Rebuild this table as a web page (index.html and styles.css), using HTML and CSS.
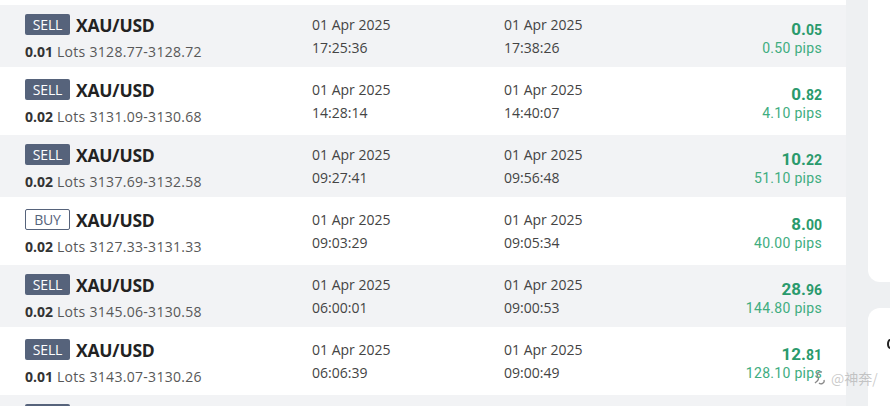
FILE: index.html
```html
<!DOCTYPE html>
<html>
<head>
<meta charset="utf-8">
<link rel="stylesheet" href="styles.css">
</head>
<body>
<div class="page">
  <div class="list">
    <div class="row alt">
      <div class="c-sym">
        <div class="sym-line"><span class="badge sell">SELL</span><span class="sym">XAU/USD</span></div>
        <div class="lots"><b>0.01</b> Lots 3128.77-3128.72</div>
      </div>
      <div class="c-date"><div>01 Apr 2025</div><div>17:25:36</div></div>
      <div class="c-date"><div>01 Apr 2025</div><div>17:38:26</div></div>
      <div class="c-profit"><div class="pnl"><span class="big">0.</span><span class="small">05</span></div><div class="pips">0.50 pips</div></div>
    </div>
    <div class="row">
      <div class="c-sym">
        <div class="sym-line"><span class="badge sell">SELL</span><span class="sym">XAU/USD</span></div>
        <div class="lots"><b>0.02</b> Lots 3131.09-3130.68</div>
      </div>
      <div class="c-date"><div>01 Apr 2025</div><div>14:28:14</div></div>
      <div class="c-date"><div>01 Apr 2025</div><div>14:40:07</div></div>
      <div class="c-profit"><div class="pnl"><span class="big">0.</span><span class="small">82</span></div><div class="pips">4.10 pips</div></div>
    </div>
    <div class="row alt">
      <div class="c-sym">
        <div class="sym-line"><span class="badge sell">SELL</span><span class="sym">XAU/USD</span></div>
        <div class="lots"><b>0.02</b> Lots 3137.69-3132.58</div>
      </div>
      <div class="c-date"><div>01 Apr 2025</div><div>09:27:41</div></div>
      <div class="c-date"><div>01 Apr 2025</div><div>09:56:48</div></div>
      <div class="c-profit"><div class="pnl"><span class="big">10.</span><span class="small">22</span></div><div class="pips">51.10 pips</div></div>
    </div>
    <div class="row">
      <div class="c-sym">
        <div class="sym-line"><span class="badge buy">BUY</span><span class="sym">XAU/USD</span></div>
        <div class="lots"><b>0.02</b> Lots 3127.33-3131.33</div>
      </div>
      <div class="c-date"><div>01 Apr 2025</div><div>09:03:29</div></div>
      <div class="c-date"><div>01 Apr 2025</div><div>09:05:34</div></div>
      <div class="c-profit"><div class="pnl"><span class="big">8.</span><span class="small">00</span></div><div class="pips">40.00 pips</div></div>
    </div>
    <div class="row alt">
      <div class="c-sym">
        <div class="sym-line"><span class="badge sell">SELL</span><span class="sym">XAU/USD</span></div>
        <div class="lots"><b>0.02</b> Lots 3145.06-3130.58</div>
      </div>
      <div class="c-date"><div>01 Apr 2025</div><div>06:00:01</div></div>
      <div class="c-date"><div>01 Apr 2025</div><div>09:00:53</div></div>
      <div class="c-profit"><div class="pnl"><span class="big">28.</span><span class="small">96</span></div><div class="pips">144.80 pips</div></div>
    </div>
    <div class="row">
      <div class="c-sym">
        <div class="sym-line"><span class="badge sell">SELL</span><span class="sym">XAU/USD</span></div>
        <div class="lots"><b>0.01</b> Lots 3143.07-3130.26</div>
      </div>
      <div class="c-date"><div>01 Apr 2025</div><div>06:06:39</div></div>
      <div class="c-date"><div>01 Apr 2025</div><div>09:00:49</div></div>
      <div class="c-profit"><div class="pnl"><span class="big">12.</span><span class="small">81</span></div><div class="pips">128.10 pips</div></div>
    </div>
    <div class="row alt">
      <div class="c-sym">
        <div class="sym-line"><span class="badge sell"></span></div>
        <div class="lots-spacer"></div>
      </div>
    </div>
  </div>
  <div class="side">
    <div class="panel top"></div>
    <div class="panel bottom"><span class="edge-glyph"></span></div>
  </div>
</div>
<div class="watermark">
  <svg class="wm-icon" width="14" height="16" viewBox="0 0 14 16"><path d="M9 2 C5 1 3 4 5 7 C7 10 3 12 2 13 M6 13 C8 15 12 13 11 10" fill="none" stroke="#8a8a8a" stroke-width="1.3"/></svg>
  <span class="wm-text">@神奔/</span>
</div>
</body>
</html>
```
FILE: styles.css
```css
html, body {
  margin: 0;
  padding: 0;
}
body {
  background: #eef0f2;
  width: 890px;
  height: 406px;
  overflow: hidden;
  position: relative;
  font-family: "Open Sans", "Noto Sans", sans-serif;
}
.page {
  display: flex;
  height: 406px;
}
.list {
  width: 846px;
  flex: none;
  background: #fff;
  padding-top: 5px;
}
.row {
  display: flex;
  align-items: center;
  height: 68px;
  padding: 4px 0 0 25px;
  box-sizing: border-box;
}
.row.alt {
  background: #f2f3f5;
  height: 62px;
}
.c-sym {
  width: 287px;
}
.sym-line {
  display: flex;
  align-items: center;
  height: 22px;
  margin-top: -2px;
}
.badge {
  box-sizing: border-box;
  width: 45px;
  height: 21px;
  border-radius: 2px;
  display: flex;
  align-items: center;
  justify-content: center;
  font-size: 14px;
  letter-spacing: -0.2px;
  margin-right: 6px;
}
.badge.sell {
  background: #56637b;
  color: #fff;
}
.badge.buy {
  border: 1px solid #56637b;
  color: #56637b;
  background: #fff;
}
.sym {
  font-weight: 700;
  font-size: 17.5px;
  color: #222;
  letter-spacing: -0.2px;
}
.lots {
  margin-top: 7px;
  font-size: 14px;
  color: #585858;
  line-height: 18px;
  letter-spacing: 0.3px;
}
.lots-spacer {
  margin-top: 7px;
  height: 18px;
}
.lots b {
  color: #333;
  letter-spacing: 0;
}
.c-date {
  width: 192px;
  font-size: 14px;
  color: #444;
  line-height: 20px;
  margin-top: -4px;
}
.c-date div + div {
  margin-top: 3px;
}
.c-profit {
  width: 126px;
  text-align: right;
  font-family: Roboto, "Noto Sans", sans-serif;
  margin-top: -1px;
}
.pnl {
  color: #2a9a6c;
  font-weight: 700;
  line-height: 20px;
}
.pnl .big {
  font-size: 17px;
}
.pnl .small {
  font-size: 14px;
}
.pips {
  color: #40ad80;
  font-size: 14px;
  line-height: 17px;
  letter-spacing: 0.3px;
}
.side {
  flex: 1;
  margin-left: 22px;
  display: flex;
  flex-direction: column;
  gap: 26px;
}
.panel {
  background: #fff;
}
.panel.top {
  height: 282px;
  border-bottom-left-radius: 12px;
}
.panel.bottom {
  flex: 1;
  border-top-left-radius: 12px;
  position: relative;
  overflow: hidden;
}
.edge-glyph {
  position: absolute;
  left: 19px;
  top: 31px;
  width: 6px;
  height: 10px;
  border: 2px solid #222;
  border-radius: 50%;
  box-sizing: border-box;
}
.watermark {
  position: absolute;
  left: 813px;
  top: 368px;
  display: flex;
  align-items: center;
  gap: 4px;
  color: rgba(150, 150, 150, 0.5);
}
.wm-text {
  font-family: "Noto Sans CJK SC", sans-serif;
  font-size: 14px;
}
```
